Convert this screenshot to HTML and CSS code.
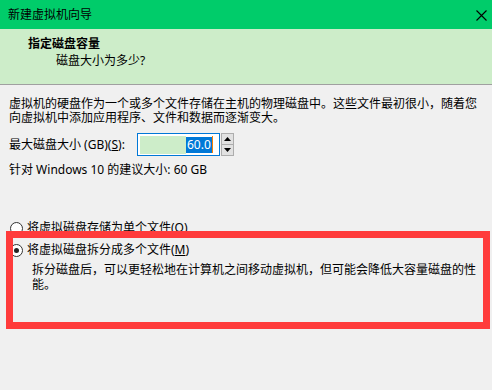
FILE: index.html
```html
<!DOCTYPE html>
<html lang="zh-CN">

<head>
    <meta charset="UTF-8">
    <meta name="viewport" content="width=device-width, initial-scale=1.0">
    <title>新建虚拟机向导</title>
    <link rel="stylesheet" href="styles.css">
</head>

<body>
    <div class="window">
        <div class="titlebar">
            <span class="title">新建虚拟机向导</span>
            <svg class="close" width="11" height="11" viewBox="0 0 11 11">
                <path d="M0.5 0.5 L10.5 10.5 M10.5 0.5 L0.5 10.5" stroke="#000" stroke-width="1.1" fill="none" />
            </svg>
        </div>

        <div class="header">
            <h2>指定磁盘容量</h2>
            <p class="subtitle">磁盘大小为多少?</p>
        </div>

        <div class="content">
            <p class="intro">虚拟机的硬盘作为一个或多个文件存储在主机的物理磁盘中。这些文件最初很小，随着您向虚拟机中添加应用程序、文件和数据而逐渐变大。</p>

            <div class="size-row">
                <label for="disk-size">最大磁盘大小 (GB)(<u>S</u>):</label>
                <div class="spinner">
                    <div class="spin-input" id="disk-size">
                        <span class="spin-fill"></span>
                        <span class="spin-value">60.0</span>
                        <span class="caret"></span>
                    </div>
                    <div class="spin-buttons">
                        <span class="spin-btn"><svg width="7" height="4" viewBox="0 0 7 4"><path d="M0 4 L3.5 0 L7 4 Z" fill="#000" /></svg></span>
                        <span class="spin-btn"><svg width="7" height="4" viewBox="0 0 7 4"><path d="M0 0 L3.5 4 L7 0 Z" fill="#000" /></svg></span>
                    </div>
                </div>
            </div>

            <p class="hint">针对 Windows 10 的建议大小: 60 GB</p>

            <div class="options">
                <label class="radio">
                    <span class="radio-dot"></span>
                    将虚拟磁盘存储为单个文件(<u>O</u>)
                </label>
                <label class="radio">
                    <span class="radio-dot checked"></span>
                    将虚拟磁盘拆分成多个文件(<u>M</u>)
                </label>
                <p class="option-desc">拆分磁盘后，可以更轻松地在计算机之间移动虚拟机，但可能会降低大容量磁盘的性能。</p>

                <!-- annotation box drawn over the second option -->
                <div class="highlight"></div>
            </div>
        </div>
    </div>
</body>

</html>
```

FILE: styles.css
```css
body {
    margin: 0;
    padding: 0;
    background-color: #f0f0f0;
    font-family: "Noto Sans", "Noto Sans CJK SC", sans-serif;
    font-size: 12px;
    line-height: 14px;
    color: #000;
}

.window {
    width: 492px;
    height: 390px;
    overflow: hidden;
}

.titlebar {
    height: 29px;
    background-color: #00cc6a;
    display: flex;
    align-items: center;
    justify-content: space-between;
    padding: 0 5px 0 8px;
}

.close {
    margin-top: 1px;
}

.header {
    height: 56px;
    background-color: #cdedc9;
    border-bottom: 1px solid #a0a0a0;
    box-sizing: border-box;
    padding-top: 8px;
}

.header h2 {
    margin: 0 0 0 28px;
    font-size: 12px;
    font-weight: bold;
    line-height: 14px;
}

.subtitle {
    margin: 3px 0 0 56px;
}

.content {
    padding: 12px 9px 0 9px;
}

.intro {
    margin: 0;
    width: 472px;
}

.size-row {
    display: flex;
    align-items: center;
    margin-top: 8px;
    height: 23px;
}

.size-row label {
    width: 128px;
}

.spinner {
    display: flex;
    height: 23px;
}

.spin-input {
    width: 79px;
    height: 21px;
    border: 1px solid #0078d7;
    background-color: #fff;
    display: flex;
    align-items: center;
    padding-left: 2px;
    box-sizing: content-box;
}

.spin-fill {
    width: 46px;
    height: 18px;
    background-color: #cdedc9;
}

.spin-value {
    background-color: #0078d7;
    color: #fff;
    height: 16px;
    line-height: 16px;
    padding: 0 1px;
}

.caret {
    width: 1px;
    height: 17px;
    background-color: #ff7f00;
}

.spin-buttons {
    display: flex;
    flex-direction: column;
    margin-left: 1px;
    width: 13px;
    height: 23px;
    border: 1px solid #adadad;
    box-sizing: border-box;
}

.spin-btn {
    flex: 1;
    display: flex;
    align-items: center;
    justify-content: center;
    background-color: #e1e1e1;
}

.spin-btn + .spin-btn {
    border-top: 1px solid #adadad;
}

.hint {
    margin: 7px 0 0 0;
}

.options {
    position: relative;
    margin-top: 44px;
}

.radio {
    display: flex;
    align-items: center;
    height: 14px;
    margin-bottom: 8px;
}

.radio-dot {
    width: 11px;
    height: 11px;
    border: 1px solid #333;
    border-radius: 50%;
    background-color: #fff;
    margin: 0 4px 0 1px;
    position: relative;
}

.radio-dot.checked::after {
    content: "";
    position: absolute;
    left: 3px;
    top: 3px;
    width: 5px;
    height: 5px;
    border-radius: 50%;
    background-color: #222;
}

.option-desc {
    margin: -3px 0 0 23px;
    width: 452px;
    line-height: 15px;
}

.highlight {
    position: absolute;
    left: -3px;
    top: 10px;
    width: 470px;
    height: 84px;
    border: 7px solid #ff3b3b;
}
```
